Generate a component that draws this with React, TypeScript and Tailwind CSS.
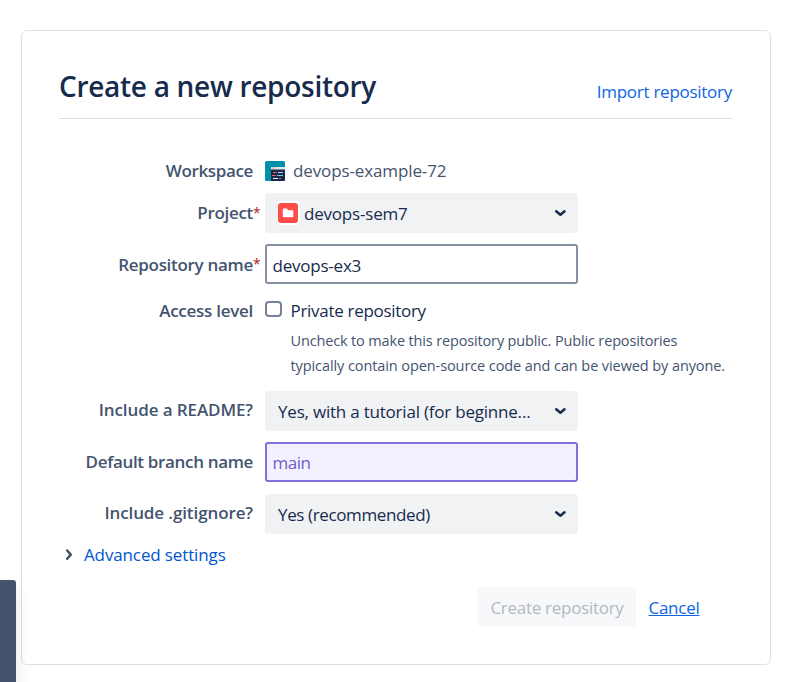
import React from "react";

function Chevron({ className = "" }: { className?: string }) {
  return (
    <svg className={className} width="12" height="8" viewBox="0 0 12 8" fill="none">
      <path d="M2.2 2.2 6.4 5.8l4.1-3.6" stroke="currentColor" strokeWidth="2.5" strokeLinecap="round" strokeLinejoin="round" />
    </svg>
  );
}

function WorkspaceIcon() {
  return (
    <svg width="20" height="20" viewBox="0 0 20 20" className="shrink-0">
      <rect width="20" height="20" rx="1.5" fill="#0090A8" />
      <path d="M6 6h14v12.5q0 1.5-1.5 1.5H6z" fill="#172B4D" />
      <path d="M6 6h14v2.5H6z" fill="#DDE3EA" />
      <rect x="7" y="6.5" width="3" height="1" fill="#F1A49A" />
      <rect x="8" y="11" width="4" height="1" fill="#E85B62" />
      <rect x="13" y="11" width="5" height="1" fill="#C5D0DD" />
      <rect x="7" y="14" width="4" height="1" fill="#E85B62" />
      <rect x="12" y="14" width="6" height="1" fill="#66CFD9" />
      <rect x="8" y="17" width="5" height="1" fill="#F4F5F7" />
      <rect x="14" y="17" width="2" height="1" fill="#E85B62" />
    </svg>
  );
}

function FolderIcon() {
  return (
    <svg width="22" height="24" viewBox="2 0 22 24" className="mr-1 shrink-0">
      <rect width="24" height="24" rx="3" fill="#fff" />
      <rect x="2" y="2" width="20" height="20" rx="3" fill="#FF4D4A" />
      <path d="M6.8 8.6q0-1 1-1h3l1.5 1.7h4q1 0 1 1v5q0 1-1 1H7.8q-1 0-1-1z" fill="#fff" />
    </svg>
  );
}

interface RowProps {
  label: string;
  tracking: string;
  required?: boolean;
  className: string;
  children: React.ReactNode;
}

function Row({ label, tracking, required, className, children }: RowProps) {
  return (
    <div className={`flex items-center gap-3 ${className}`}>
      <div className="flex w-[194px] shrink-0 justify-end font-semibold leading-6 text-[#44546F]">
        <span className={`whitespace-nowrap ${tracking}`}>{label}</span>
        {required && <span className="-mr-2 w-2 text-[14px] leading-[23px] font-normal text-[#AE2A19]">*</span>}
      </div>
      {children}
    </div>
  );
}

function Select({ text, tracking, icon }: { text: string; tracking: string; icon?: React.ReactNode }) {
  return (
    <div className="flex h-10 w-[313px] items-center justify-between rounded-[3px] bg-[#F1F2F4] pr-3 pl-[13px] text-[#172B4D]">
      <div className="flex items-center">
        {icon}
        <span className={`pt-0.5 whitespace-nowrap ${tracking}`}>{text}</span>
      </div>
      <Chevron />
    </div>
  );
}

export default function App() {
  return (
    <div className="relative h-[682px] w-[806px] overflow-hidden bg-white pt-[30px] pl-[21px] font-['Open_Sans',sans-serif] text-[17px]">
      <main className="h-[635px] w-[750px] rounded-md border border-[#DCDFE4] px-[37px]">
        <header className="flex h-[88px] w-[673px] items-center justify-between border-b border-[#DCDFE4] pt-[22px] text-[#172B4D]">
          <h1 className="text-[28px] font-semibold tracking-[-0.29px] whitespace-nowrap">Create a new repository</h1>
          <a className="mt-3 tracking-[-0.27px] whitespace-nowrap text-[#0C66E4]">Import repository</a>
        </header>
        <Row label="Workspace" tracking="tracking-[-0.36px]" className="mt-10 h-6">
          <div className="flex items-center gap-2 text-[#44546F]">
            <WorkspaceIcon />
            <span className="tracking-[-0.12px] whitespace-nowrap">devops-example-72</span>
          </div>
        </Row>
        <Row label="Project" tracking="tracking-[-0.3px]" required className="mt-[10px] h-10">
          <Select text="devops-sem7" tracking="tracking-[-0.2px]" icon={<FolderIcon />} />
        </Row>
        <Row label="Repository name" tracking="pt-px tracking-[-0.3px]" required className="mt-[11px] h-10">
          <div className="flex h-10 w-[313px] items-center rounded-[3px] border-2 border-[#8590A2] px-[5.5px] pt-[3px] text-[#172B4D]">
            <span className="tracking-[-0.22px]">devops-ex3</span>
          </div>
        </Row>
        <Row label="Access level" tracking="tracking-[-0.27px]" className="mt-[15px] h-6">
          <div className="flex items-center gap-2 text-[#172B4D]">
            <span className="-mt-1 h-4 w-[17px] rounded border-2 border-[#758195]" />
            <span className="pl-[0.5px] tracking-[-0.3px] whitespace-nowrap">Private repository</span>
          </div>
        </Row>
        <div className="mt-[5px] ml-[231.5px] text-[14.5px] leading-[25px] whitespace-nowrap text-[#44546F]">
          <div className="tracking-[-0.15px]">Uncheck to make this repository public. Public repositories</div>
          <div className="tracking-[-0.09px]">typically contain open-source code and can be viewed by anyone.</div>
        </div>
        <Row label="Include a README?" tracking="pb-0.5 tracking-[-0.1px]" className="mt-[13px] h-10">
          <Select text="Yes, with a tutorial (for beginne..." tracking="tracking-[-0.21px]" />
        </Row>
        <Row label="Default branch name" tracking="tracking-[-0.34px]" className="mt-[11px] h-10">
          <div className="flex h-10 w-[313px] items-center rounded-[3px] border-2 border-[#8270DB] bg-[#F3F0FF] px-[5.5px] pt-0.5 text-[#6E5DC6]">
            <span className="tracking-[-0.5px]">main</span>
          </div>
        </Row>
        <Row label="Include .gitignore?" tracking="pb-0.5 tracking-[-0.1px]" className="mt-3 h-10">
          <Select text="Yes (recommended)" tracking="tracking-[-0.37px]" />
        </Row>
        <div className="mt-[9px] flex h-6 items-center gap-[9px] pl-1">
          <Chevron className="-rotate-90 text-[#44546F]" />
          <a className="tracking-[-0.13px] text-[#0055CC]">Advanced settings</a>
        </div>
        <div className="mt-5 ml-[419px] flex h-10 items-center gap-3">
          <button className="h-10 w-[158px] rounded-[3px] bg-[#F7F8F9] pt-0.5 tracking-[-0.28px] whitespace-nowrap text-[#B3B9C4]">
            Create repository
          </button>
          <a className="pt-0.5 pl-[0.5px] tracking-[-0.27px] text-[#0C66E4] underline decoration-1 underline-offset-1 [text-decoration-skip-ink:none]">Cancel</a>
        </div>
      </main>
      <aside className="absolute bottom-0 left-0 h-[102px] w-4 rounded-tr-[3px] bg-[#44546F] shadow-[0_8px_16px_rgba(9,30,66,0.12)]" />
    </div>
  );
}
